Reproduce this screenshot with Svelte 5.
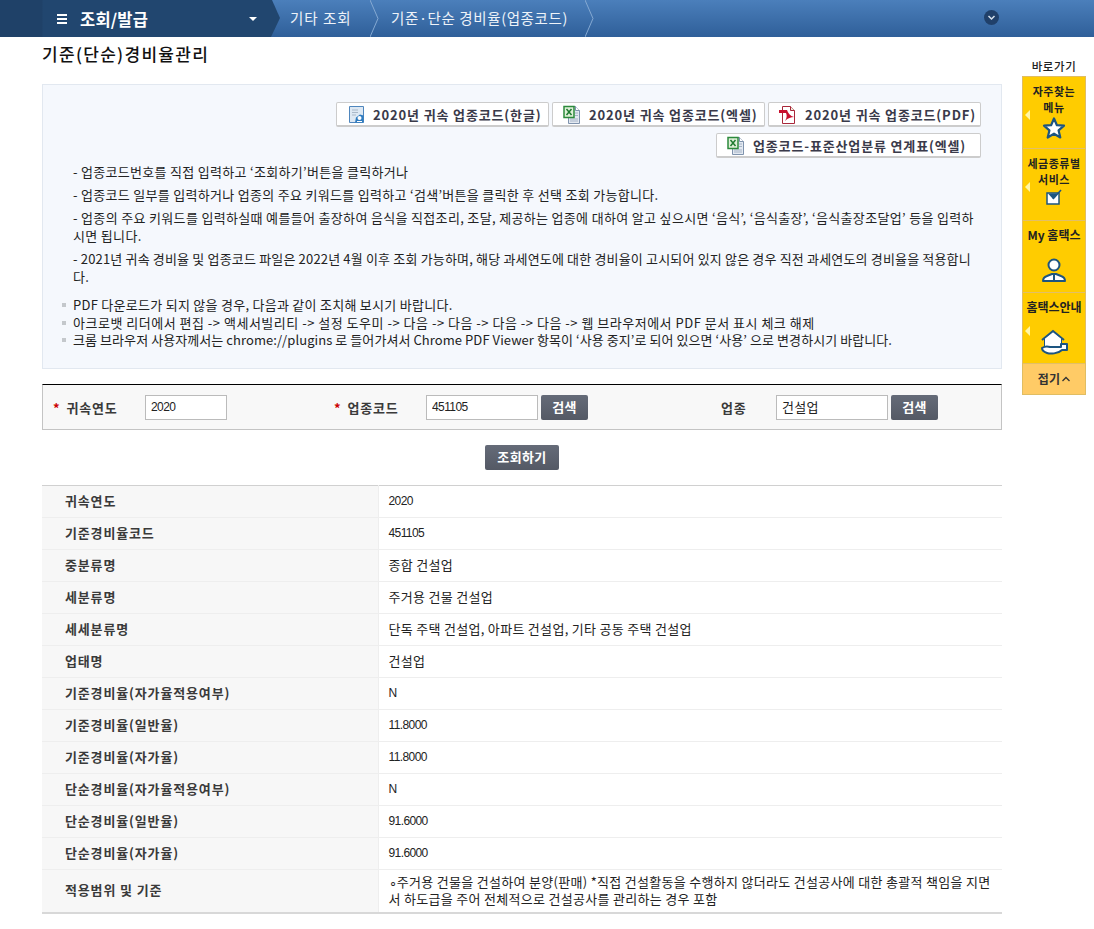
<script>
    const rows = [
        ["귀속연도", "2020", true],
        ["기준경비율코드", "451105", true],
        ["중분류명", "종합 건설업"],
        ["세분류명", "주거용 건물 건설업"],
        ["세세분류명", "단독 주택 건설업, 아파트 건설업, 기타 공동 주택 건설업"],
        ["업태명", "건설업"],
        ["기준경비율(자가율적용여부)", "N", true],
        ["기준경비율(일반율)", "11.8000", true],
        ["기준경비율(자가율)", "11.8000", true],
        ["단순경비율(자가율적용여부)", "N", true],
        ["단순경비율(일반율)", "91.6000", true],
        ["단순경비율(자가율)", "91.6000", true],
        ["적용범위 및 기준", "∘주거용 건물을 건설하여 분양(판매) *직접 건설활동을 수행하지 않더라도 건설공사에 대한 총괄적 책임을 지면서 하도급을 주어 전체적으로 건설공사를 관리하는 경우 포함"]
    ]
    const guide = [
        "- 업종코드번호를 직접 입력하고 ‘조회하기’버튼을 클릭하거나",
        "- 업종코드 일부를 입력하거나 업종의 주요 키워드를 입력하고 ‘검색’버튼을 클릭한 후 선택 조회 가능합니다.",
        "- 업종의 주요 키워드를 입력하실때 예를들어 출장하여 음식을 직접조리, 조달, 제공하는 업종에 대하여 알고 싶으시면 ‘음식’, ‘음식출장’, ‘음식출장조달업’ 등을 입력하시면 됩니다.",
        "- 2021년 귀속 경비율 및 업종코드 파일은 2022년 4월 이후 조회 가능하며, 해당 과세연도에 대한 경비율이 고시되어 있지 않은 경우 직전 과세연도의 경비율을 적용합니다."
    ]
    const notes = [
        "PDF 다운로드가 되지 않을 경우, 다음과 같이 조치해 보시기 바랍니다.",
        "아크로뱃 리더에서 편집 -> 액세서빌리티 -> 설정 도우미 -> 다음 -> 다음 -> 다음 -> 다음 -> 웹 브라우저에서 PDF 문서 표시 체크 해제",
        "크롬 브라우저 사용자께서는 chrome://plugins 로 들어가셔서 Chrome PDF Viewer 항목이 ‘사용 중지’로 되어 있으면 ‘사용’ 으로 변경하시기 바랍니다."
    ]
</script>

{#snippet fileIcon(kind)}
    <svg class="file" width="18" height="19" viewBox="0 0 18 19">
        {#if kind === "pdf"}
            <path d="M3.500 1.500h8l4 4v13h-12z" fill="#fff" stroke="#a8273a"/>
            <path d="M11.500 1.500v4h4" fill="#eed" stroke="#a8273a"/>
            <path d="M0 5h8c1 3 3 6 7 7-3 0-6 1-9 4 2-3 2-6 1-8H0z" fill="#c8102e"/>
        {:else if kind === "hwp"}
            <path d="M2.500 1.500h14v16h-14z" fill="#dde8f3" stroke="#4f86bd"/>
            <path d="M5 5h6M5 7.500h6M5 10h4" stroke="#a9b8c8"/>
            <path d="M8 17.500l1-5 4-3 3.500 1v7z" fill="#2f7cc0"/>
            <circle cx="12.500" cy="13" r="2" fill="#fff"/>
            <path d="M10 16.500h5" stroke="#fff"/>
        {:else}
            <path d="M5.500 1.500h7l4 4v13h-11z" fill="#e3e9f1" stroke="#7f93ad"/>
            <path d="M12.500 1.500v4h4" fill="#fff" stroke="#7f93ad"/>
            <path d="M12 8h3M12 10.500h3M7 14h8M7 16h8" stroke="#a5b3c6"/>
            <rect x="1" y="1.500" width="10" height="11" fill="#dff0d8" stroke="#2c8a3c" stroke-width="1.500"/>
            <path d="M3.500 4l5 6M8.500 4l-5 6" stroke="#1f7a30" stroke-width="1.500"/>
        {/if}
    </svg>
{/snippet}

{#snippet chevron()}
    <svg class="chev" width="10" height="37" viewBox="0 0 10 37">
        <path d="M0 0l8 18.500L0 37" fill="none" stroke="#85a9d2"/>
    </svg>
{/snippet}

{#snippet sideArrow()}
    <span class="side-arrow"></span>
{/snippet}

<header class="topbar">
    <div class="menu-head">
        <span class="burger"></span>
        <strong>조회/발급</strong>
        <span class="caret"></span>
    </div>
    <div class="crumb first">기타 조회{@render chevron()}</div>
    <div class="crumb second">기준·단순 경비율(업종코드){@render chevron()}</div>
    <svg class="more" width="15" height="15" viewBox="0 0 15 15">
        <circle cx="7.500" cy="7.500" r="7.500" fill="#20406a"/>
        <path d="M4.500 6l3 3 3-3" fill="none" stroke="#d5dfea" stroke-width="1.500"/>
    </svg>
</header>

<div class="page">
    <main>
        <h1>기준(단순)경비율관리</h1>

        <section class="panel">
            <div class="downloads">
                <button class="dl w213">{@render fileIcon("hwp")}<span>2020년 귀속 업종코드(한글)</span></button>
                <button class="dl w213">{@render fileIcon("xls")}<span>2020년 귀속 업종코드(엑셀)</span></button>
                <button class="dl w213">{@render fileIcon("pdf")}<span>2020년 귀속 업종코드(PDF)</span></button>
                <button class="dl w265">{@render fileIcon("xls")}<span>업종코드-표준산업분류 연계표(엑셀)</span></button>
            </div>
            <div class="guide">
                {#each guide as line}
                    <p>{line}</p>
                {/each}
            </div>
            <ul class="notes">
                {#each notes as line}
                    <li>{line}</li>
                {/each}
            </ul>
        </section>

        <form class="search" onsubmit={(e) => e.preventDefault()}>
            <div class="field f1">
                <label for="yr"><i>*</i>귀속연도</label>
                <input id="yr" class="num w82" value="2020" />
            </div>
            <div class="field f2">
                <label for="code"><i>*</i>업종코드</label>
                <input id="code" class="num w112" value="451105" />
                <button class="dark">검색</button>
            </div>
            <div class="field f3">
                <label for="biz">업종</label>
                <input id="biz" class="w112" value="건설업" />
                <button class="dark">검색</button>
            </div>
        </form>

        <div class="actions"><button class="dark big">조회하기</button></div>

        <table>
            <tbody>
                {#each rows as [name, value, numeric]}
                    <tr>
                        <th>{name}</th>
                        <td class:num={numeric}>{value}</td>
                    </tr>
                {/each}
            </tbody>
        </table>
    </main>

    <aside>
        <div class="side-title">바로가기</div>
        <div class="side-box">
            <div class="side-item h72">
                {@render sideArrow()}
                <b class="two">자주찾는<br />메뉴</b>
                <svg width="24" height="24" viewBox="0 0 24 24"><path d="M12 2.500l2.900 6.700 7.100.5-5.400 4.700 1.700 7.100-6.300-3.800-6.300 3.800 1.700-7.100L2 9.700l7.100-.5z" fill="#fff" stroke="#1d5580" stroke-width="2.200" stroke-linejoin="round"/></svg>
            </div>
            <div class="side-item h72">
                {@render sideArrow()}
                <b class="two">세금종류별<br />서비스</b>
                <svg class="chk" width="18" height="18" viewBox="0 0 18 18"><path d="M2 4h12v11H2z" fill="#fff" stroke="#1d5580" stroke-width="1.500"/><path d="M3 4.500h10L8 10z" fill="#1d5580"/><path d="M8 10l8-9" stroke="#1d5580" stroke-width="1.500"/></svg>
            </div>
            <div class="side-item h72">
                <b class="one">My 홈택스</b>
                <svg width="26" height="26" viewBox="0 0 26 26"><circle cx="13" cy="8" r="5.500" fill="#fff" stroke="#1d5580" stroke-width="2"/><path d="M2 24c0-2 1-4 4-5l5-2h4l5 2c3 1 4 3 4 5z" fill="#fff" stroke="#1d5580" stroke-width="2" stroke-linejoin="round"/><path d="M13 17v6" stroke="#1d5580" stroke-width="2"/></svg>
            </div>
            <div class="side-item h71">
                {@render sideArrow()}
                <b class="one">홈택스안내</b>
                <svg width="30" height="28" viewBox="0 0 30 28"><path d="M3 11L14 2l11 9" fill="#fff" stroke="#1d5580" stroke-width="2"/><path d="M6 10v7M22 10v6" fill="none" stroke="#1d5580" stroke-width="2"/><path d="M6 10l8-6 8 6v7H6z" fill="#fff"/><path d="M3 19c3-2 5-2 8-1h11v-3h6v6h-5c-4 4-12 4-15 3-3-1-5-3-5-5z" fill="#fff" stroke="#1d5580" stroke-width="2" stroke-linejoin="round"/></svg>
            </div>
            <div class="side-fold">접기<svg width="8" height="6" viewBox="0 0 8 6"><path d="M.5 5L4 1.500 7.500 5" fill="none" stroke="#333" stroke-width="1.300"/></svg></div>
        </div>
    </aside>
</div>

<style>
    :global(body) {
        margin: 0;
        background: #fff;
        color: #222;
        font-family: "Noto Sans CJK KR", "Noto Sans", sans-serif;
        font-size: 13px;
        letter-spacing: .3px;
    }

    .topbar {
        position: relative;
        display: flex;
        height: 37px;
        background: linear-gradient(#4b7fbb, #2f5f99);
        color: #fff;
    }

    .menu-head {
        box-sizing: border-box;
        display: flex;
        align-items: center;
        width: 280px;
        height: 37px;
        padding-left: 57px;
        background: linear-gradient(90deg, #1f4168 42px, #21466f 43px);
        clip-path: polygon(0 0, 272px 0, 280px 18px, 271px 37px, 0 37px);
    }

    .menu-head strong {
        margin-left: 13px;
        width: 169px;
        font-size: 16.500px;
        letter-spacing: .2px;
    }

    .burger {
        box-sizing: border-box;
        width: 10px;
        height: 10px;
        border-top: 2px solid #fff;
        border-bottom: 2px solid #fff;
        background: linear-gradient(#fff, #fff) center / 100% 2px no-repeat;
    }

    .caret {
        border: 4px solid transparent;
        border-top: 4px solid #fff;
        border-bottom: 0;
    }

    .crumb {
        position: relative;
        box-sizing: border-box;
        font-size: 14.500px;
        line-height: 35px;
        letter-spacing: .6px;
        color: #eef3f9;
    }

    .crumb.first {
        width: 100px;
        padding-left: 10px;
        letter-spacing: 1px;
    }

    .crumb.second {
        width: 215px;
        padding-left: 11px;
    }

    .chev {
        position: absolute;
        right: 0;
        top: 0;
    }

    .more {
        position: absolute;
        left: 984px;
        top: 10px;
    }

    .page {
        display: flex;
        align-items: flex-start;
        padding-left: 42px;
    }

    main {
        width: 960px;
    }

    h1 {
        margin: 7px 0 20px;
        font-size: 17px;
        line-height: 20px;
        font-weight: 500;
        letter-spacing: 1.300px;
        color: #111;
    }

    .panel {
        box-sizing: border-box;
        height: 285px;
        padding: 17px 20px 0 30px;
        background: #f5f8fd;
        border: 1px solid #e2e8f0;
    }

    .downloads {
        display: flex;
        flex-wrap: wrap;
        justify-content: flex-end;
        gap: 6px 3px;
    }

    .dl {
        display: flex;
        align-items: center;
        box-sizing: border-box;
        height: 25px;
        padding: 0 0 0 10px;
        background: #fff;
        border: 1px solid #ccc;
        border-bottom-width: 2px;
        border-radius: 2px;
        font: 700 13px "Noto Sans CJK KR", sans-serif;
        letter-spacing: .85px;
        color: #3a3a4a;
    }

    .w213 { width: 213px; }
    .w265 { width: 265px; }

    .dl span {
        margin-left: 8px;
        white-space: nowrap;
    }

    .guide {
        margin-top: 5px;
    }

    .guide p {
        margin: 0 0 5px;
        line-height: 18px;
        word-break: break-all;
    }

    .guide p:nth-child(3) { letter-spacing: .33px; }
    .guide p:nth-child(4) { letter-spacing: .17px; }

    .notes {
        margin: 10px 0 0 -11px;
        padding: 0;
        list-style: none;
    }

    .notes li {
        position: relative;
        padding-left: 11px;
        line-height: 17.500px;
        white-space: nowrap;
    }

    .notes li:nth-child(1) { letter-spacing: .27px; }
    .notes li:nth-child(2) { letter-spacing: .5px; }
    .notes li:nth-child(3) { letter-spacing: .07px; }

    .notes li::before {
        content: "";
        position: absolute;
        left: 0;
        top: 7px;
        width: 4px;
        height: 4px;
        background: #c4c8cc;
    }

    .search {
        display: flex;
        align-items: center;
        box-sizing: border-box;
        height: 46px;
        margin-top: 15px;
        background: #f8f8f8;
        border: 1px solid #c4c4c4;
        border-top: 1px solid #000;
    }

    .field {
        display: flex;
        align-items: center;
        box-sizing: border-box;
    }

    .f1 { width: 281px; padding-left: 10px; }
    .f2 { width: 384px; padding-left: 10px; }
    .f1 label, .f2 label { width: 92px; }
    .f3 { padding-left: 13px; }
    .f3 label { width: 55px; }

    label {
        font-weight: 700;
        font-size: 13px;
        letter-spacing: .8px;
        color: #3a3a3a;
    }

    label i {
        margin-right: 6px;
        color: #c00;
        font-style: normal;
    }

    input {
        box-sizing: border-box;
        height: 25px;
        padding: 0 0 2px 5px;
        border: 1px solid #bbb;
        background: #fff;
        font: 13px "Noto Sans CJK KR", sans-serif;
        letter-spacing: .3px;
        color: #222;
    }

    .w82 { width: 82px; }
    .w112 { width: 112px; }

    input.num {
        padding-bottom: 0;
        font-family: "Liberation Sans", sans-serif;
        font-size: 12px;
        letter-spacing: -.6px;
    }

    .dark {
        box-sizing: border-box;
        width: 47px;
        height: 25px;
        margin-left: 3px;
        padding: 0 0 2px;
        border: 0;
        border-radius: 2px;
        background: linear-gradient(#656b78, #545965);
        color: #fff;
        font: 700 13px "Noto Sans CJK KR", sans-serif;
        letter-spacing: .4px;
    }

    .actions {
        display: flex;
        justify-content: center;
        margin: 15px 0;
    }

    .big {
        width: 74px;
        margin: 0;
    }

    table {
        width: 100%;
        border-collapse: collapse;
        border-top: 1px solid #d0d0d0;
        border-bottom: 2px solid #d8d8d8;
    }

    tr {
        height: 32px;
        border-bottom: 1px solid #eee;
    }

    tr:last-child {
        border-bottom: 0;
    }

    th {
        box-sizing: border-box;
        width: 336px;
        padding: 0 0 3px 23px;
        background: #f7f7f7;
        border-right: 1px solid #eee;
        text-align: left;
        font-size: 13px;
        font-weight: 700;
        letter-spacing: .85px;
        color: #3a3a3a;
    }

    td {
        padding: 0 10px 3px 10px;
        line-height: 17px;
        word-break: break-all;
    }

    td.num {
        padding-bottom: 0;
        font-family: "Liberation Sans", sans-serif;
        font-size: 12px;
        letter-spacing: -.6px;
    }

    tr:last-child td {
        padding-top: 3px;
        padding-bottom: 5px;
    }

    aside {
        width: 64px;
        margin-left: 20px;
    }

    .side-title {
        margin-top: 20px;
        line-height: 19px;
        text-align: center;
        font-size: 11.500px;
        font-weight: 500;
        letter-spacing: .6px;
        color: #222;
    }

    .side-box {
        border: 1px solid #e0bd63;
        background: #fc0;
    }

    .side-item {
        position: relative;
        display: flex;
        flex-direction: column;
        align-items: center;
        box-sizing: border-box;
        padding-top: 7px;
        border-bottom: 1px solid #e2bf67;
    }

    .h72 { height: 72px; }
    .h71 { height: 71px; }

    .side-item b {
        font-weight: 700;
        text-align: center;
        white-space: nowrap;
        color: #222;
    }

    .side-item b.two {
        height: 33px;
        margin-top: -1px;
        font-size: 11px;
        line-height: 16px;
        letter-spacing: .5px;
    }

    .side-item b.one {
        height: 29px;
        font-size: 12px;
        line-height: 14px;
        letter-spacing: 0;
    }

    .chk {
        margin-top: 1px;
    }

    .side-arrow {
        position: absolute;
        left: 2px;
        top: 33px;
        border: 5px solid transparent;
        border-right: 5px solid #fff6a8;
        border-left: 0;
    }

    .side-fold {
        display: flex;
        align-items: center;
        justify-content: center;
        gap: 2px;
        height: 30px;
        padding-bottom: 1px;
        box-sizing: border-box;
        background: #ffcb66;
        font-size: 12px;
        font-weight: 700;
        color: #333;
    }
</style>
